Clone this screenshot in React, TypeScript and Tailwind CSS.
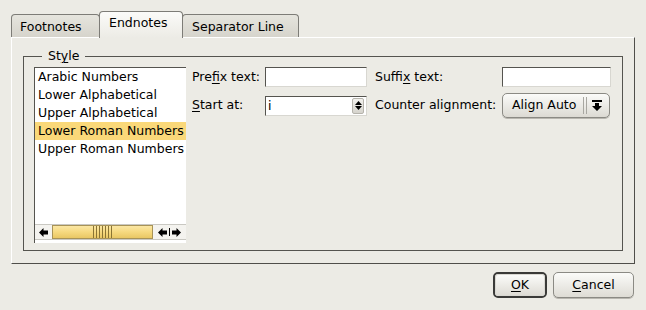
import React from 'react';

const styles = ['Arabic Numbers', 'Lower Alphabetical', 'Upper Alphabetical', 'Lower Roman Numbers', 'Upper Roman Numbers'];

const Mn: React.FC<{ children: React.ReactNode }> = ({ children }) => (
  <span className="underline underline-offset-[2px] decoration-[1px]">{children}</span>
);

const Arrow: React.FC<{ dir: 'left' | 'right' }> = ({ dir }) => (
  <svg width="9" height="9" viewBox="0 0 9 9">
    {dir === 'left' ? (
      <path d="M0 4.5 L4.5 0 V2.5 H9 V6.5 H4.5 V9 Z" fill="#000" />
    ) : (
      <path d="M9 4.5 L4.5 0 V2.5 H0 V6.5 H4.5 V9 Z" fill="#000" />
    )}
  </svg>
);

export default function App() {
  return (
    <div className="w-[646px] h-[310px] bg-[#ecebe5] px-[11px] pt-[11px] text-[12.5px] text-black" style={{ fontFamily: '"DejaVu Sans", sans-serif' }}>
      {/* Tabs */}
      <div className="flex items-end h-[26px]">
        <div className="h-[23px] w-[89px] border border-b-0 border-[#7d7c77] rounded-t-[4px] bg-gradient-to-b from-[#e6e5de] to-[#d6d4cc] pl-[8px] pt-[4px] leading-[15px]">
          Footnotes
        </div>
        <div className="relative z-10 -mb-px -ml-px h-[27px] w-[84px] border border-b-0 border-[#7d7c77] rounded-t-[4px] bg-gradient-to-b from-[#fbfbf9] to-[#ecebe5] pl-[9px] pt-[3px] leading-[15px]">
          Endnotes
        </div>
        <div className="h-[23px] -ml-px w-[117px] border border-b-0 border-[#7d7c77] rounded-t-[4px] bg-gradient-to-b from-[#e6e5de] to-[#d6d4cc] pl-[9px] pt-[4px] leading-[15px]">
          Separator Line
        </div>
      </div>

      {/* Pane */}
      <div className="w-[624px] h-[227px] border-t border-l border-t-white border-l-white border-r border-b border-r-[#4f4e4a] border-b-[#4f4e4a] pl-[11px]">
        <fieldset className="mt-[11px] w-[600px] h-[202px] border border-[#55544f] pl-[10px] pt-[4px]">
          <legend className="ml-[8px] px-[6px] leading-[14px]">
            St<Mn>y</Mn>le
          </legend>
          <div className="flex items-start">
            {/* List */}
            <div className="w-[152px] h-[176px] bg-white border-t border-l border-[#55544f] flex flex-col">
              <div className="flex-1">
                {styles.map(s => (
                  <div key={s} className={`h-[18px] pl-[3px] leading-[18px] ${s === 'Lower Roman Numbers' ? 'bg-[#fad879]' : ''}`}>
                    {s}
                  </div>
                ))}
              </div>
              <div className="h-[16px] mb-[3px] flex items-stretch border-y border-[#c9c8c2]">
                <div className="w-[17px] bg-[#f4f3ef] flex items-center justify-center">
                  <Arrow dir="left" />
                </div>
                <div className="w-[101px] border border-[#a89357] bg-gradient-to-b from-[#fbe7a4] via-[#f6d97f] to-[#e9c763] flex items-center justify-center">
                  <div className="flex gap-[2px] h-[12px]">
                    {Array.from({ length: 7 }).map((_, i) => (
                      <div key={i} className="w-px h-full bg-[#8a7434]" />
                    ))}
                  </div>
                </div>
                <div className="flex-1 bg-[#f4f3ef] flex items-center justify-center gap-[2px]">
                  <Arrow dir="left" />
                  <div className="w-px h-[8px] bg-black" />
                  <Arrow dir="right" />
                </div>
              </div>
            </div>

            {/* Form */}
            <div className="ml-[6px] flex flex-col">
              <div className="flex items-center h-[20px]">
                <div className="w-[73px]">Pre<Mn>f</Mn>ix text:</div>
                <div className="w-[102px] h-[20px] bg-white border-t border-l border-[#55544f] border-r border-b border-r-[#d8d7d1] border-b-[#d8d7d1]" />
                <div className="w-[135px] pl-[8px]">Suffi<Mn>x</Mn> text:</div>
                <div className="w-[109px] h-[20px] bg-white border-t border-l border-[#55544f] border-r border-b border-r-[#d8d7d1] border-b-[#d8d7d1]" />
              </div>
              <div className="flex items-center h-[25px] mt-[6px]">
                <div className="w-[73px]"><Mn>S</Mn>tart at:</div>
                <div className="w-[102px] h-[20px] bg-white border-t border-l border-[#55544f] border-r border-b border-r-[#d8d7d1] border-b-[#d8d7d1] flex items-center">
                  <span className="flex-1 pl-[2px] leading-[16px]">i</span>
                  <div className="w-[12px] h-[16px] mr-[2px] bg-gradient-to-b from-[#f3f2ee] to-[#d5d3cc] border border-[#b5b3ac] rounded-[2px] flex flex-col items-center justify-center gap-[1px]">
                    <svg width="7" height="4" viewBox="0 0 7 4"><path d="M0 4 L3.5 0 L7 4 Z" fill="#000" /></svg>
                    <svg width="7" height="4" viewBox="0 0 7 4"><path d="M0 0 L3.5 4 L7 0 Z" fill="#000" /></svg>
                  </div>
                </div>
                <div className="w-[135px] pl-[8px]">Counter alignment:</div>
                <div className="w-[108px] h-[25px] rounded-[5px] border border-[#8b8a84] bg-gradient-to-b from-[#fbfbf9] to-[#dcdad3] shadow-[0_1px_0_#b9b7b0] flex items-center">
                  <span className="pl-[9px] flex-1">Align Auto</span>
                  <div className="flex gap-[2px] h-[17px] mr-[5px]">
                    <div className="w-px bg-[#a8a7a1]" />
                    <div className="w-px bg-[#a8a7a1]" />
                  </div>
                  <svg width="10" height="11" viewBox="0 0 10 11" className="mr-[7px]">
                    <rect x="0" y="0" width="10" height="2" fill="#000" />
                    <path d="M3 3 H7 V6 H10 L5 11 L0 6 H3 Z" fill="#000" />
                  </svg>
                </div>
              </div>
            </div>
          </div>
        </fieldset>
      </div>

      {/* Buttons */}
      <div className="flex justify-end mt-[8px] mr-px gap-[6px]">
        <div className="w-[54px] h-[26px] rounded-[5px] border-2 border-[#3a3a38]">
          <div className="h-full rounded-[3px] border border-[#d9d8d2] bg-gradient-to-b from-[#fbfbf9] to-[#dedcd5] flex items-center justify-center">
            <Mn>O</Mn>K
          </div>
        </div>
        <div className="w-[81px] h-[26px] rounded-[5px] border border-[#8b8a84] bg-gradient-to-b from-[#fbfbf9] to-[#dedcd5] shadow-[0_1px_0_#b9b7b0] flex items-center justify-center">
          <Mn>C</Mn>ancel
        </div>
      </div>
    </div>
  );
}
